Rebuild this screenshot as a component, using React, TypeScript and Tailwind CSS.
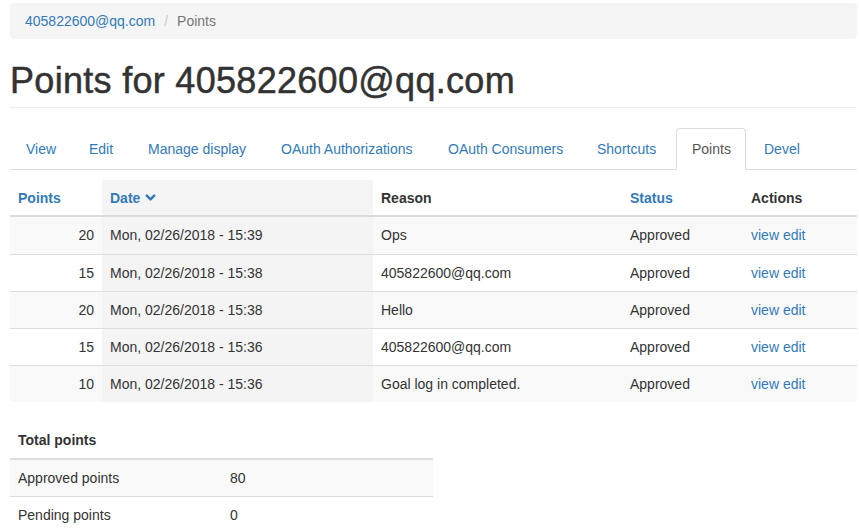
import { ChevronDown } from 'lucide-react';

const tabs = [
  { label: 'View', w: 'w-[61px]' },
  { label: 'Edit', w: 'w-[57px]' },
  { label: 'Manage display', w: 'w-[131px]' },
  { label: 'OAuth Authorizations', w: 'w-[165px]' },
  { label: 'OAuth Consumers', w: 'w-[147px]' },
  { label: 'Shortcuts', w: 'w-[93px]' },
  { label: 'Points', w: 'w-[70px]', active: true },
  { label: 'Devel', w: 'w-[70px]' },
];

const rows = [
  { points: 20, date: 'Mon, 02/26/2018 - 15:39', reason: 'Ops' },
  { points: 15, date: 'Mon, 02/26/2018 - 15:38', reason: '405822600@qq.com' },
  { points: 20, date: 'Mon, 02/26/2018 - 15:38', reason: 'Hello' },
  { points: 15, date: 'Mon, 02/26/2018 - 15:36', reason: '405822600@qq.com' },
  { points: 10, date: 'Mon, 02/26/2018 - 15:36', reason: 'Goal log in completed.' },
];

const App = () => {
  return (
    <div className="pl-[10px] pr-[2px] pt-[3px] text-[14px] leading-[20px] text-[#333] font-['Liberation_Sans',Arial,sans-serif]">
      {/* Breadcrumb */}
      <div className="h-[36px] px-[15px] py-[8px] bg-[#f5f5f5] rounded-[4px] flex items-center">
        <a className="text-[#337ab7]">405822600@qq.com</a>
        <span className="px-[9px] text-[#ccc]">/</span>
        <span className="text-[#777]">Points</span>
      </div>

      {/* Page header */}
      <div className="mt-[22px] pb-[6px] border-b border-[#eee]">
        <h1 className="text-[36px] leading-[40px] font-normal tracking-[0.3px] text-[#333] [-webkit-text-stroke:0.5px_#333]">
          Points for 405822600@qq.com
        </h1>
      </div>

      {/* Tabs */}
      <div className="mt-[20px] flex border-b border-[#ddd] h-[42px]">
        {tabs.map((t) => (
          <div
            key={t.label}
            className={`${t.w} mr-[2px] h-[42px] pl-[15px] py-[10px] rounded-t-[4px] border whitespace-nowrap ${
              t.active ? 'bg-white border-[#ddd] border-b-white text-[#555]' : 'border-transparent text-[#337ab7]'
            }`}
          >
            {t.label}
          </div>
        ))}
      </div>

      {/* Points table */}
      <table className="mt-[10px] w-full border-collapse table-fixed">
        <colgroup>
          <col className="w-[92px]" />
          <col className="w-[271px]" />
          <col className="w-[249px]" />
          <col className="w-[121px]" />
          <col />
        </colgroup>
        <thead>
          <tr className="border-b-2 border-[#ddd]">
            <th className="h-[36px] px-[8px] text-left font-bold text-[#337ab7]">Points</th>
            <th className="px-[8px] text-left font-bold text-[#337ab7] bg-[#f5f5f5]">
              <span className="inline-flex items-center gap-[3px]">
                Date <ChevronDown className="w-[15px] h-[15px]" strokeWidth={4} />
              </span>
            </th>
            <th className="px-[8px] text-left font-bold">Reason</th>
            <th className="px-[8px] text-left font-bold text-[#337ab7]">Status</th>
            <th className="px-[8px] text-left font-bold">Actions</th>
          </tr>
        </thead>
        <tbody>
          {rows.map((r, i) => (
            <tr key={i} className={`border-t border-[#ddd] ${i % 2 === 0 ? 'bg-[#f9f9f9]' : 'bg-white'}`}>
              <td className={`${i === 0 ? 'h-[38px]' : 'h-[37px]'} px-[8px] text-right`}>{r.points}</td>
              <td className="px-[8px] bg-[#f4f4f4]">{r.date}</td>
              <td className="px-[8px]">{r.reason}</td>
              <td className="px-[8px]">Approved</td>
              <td className="px-[8px] text-[#337ab7]">view edit</td>
            </tr>
          ))}
        </tbody>
      </table>

      {/* Totals */}
      <table className="mt-[20px] w-[423px] border-collapse table-fixed">
        <colgroup>
          <col className="w-[212px]" />
          <col />
        </colgroup>
        <thead>
          <tr className="border-b-2 border-[#ddd]">
            <th colSpan={2} className="h-[37px] px-[8px] text-left font-bold">Total points</th>
          </tr>
        </thead>
        <tbody>
          <tr className="bg-[#f9f9f9]">
            <td className="h-[37px] px-[8px]">Approved points</td>
            <td className="px-[8px]">80</td>
          </tr>
          <tr className="border-t border-[#ddd]">
            <td className="h-[37px] px-[8px]">Pending points</td>
            <td className="px-[8px]">0</td>
          </tr>
        </tbody>
      </table>
    </div>
  );
};

export default App;
